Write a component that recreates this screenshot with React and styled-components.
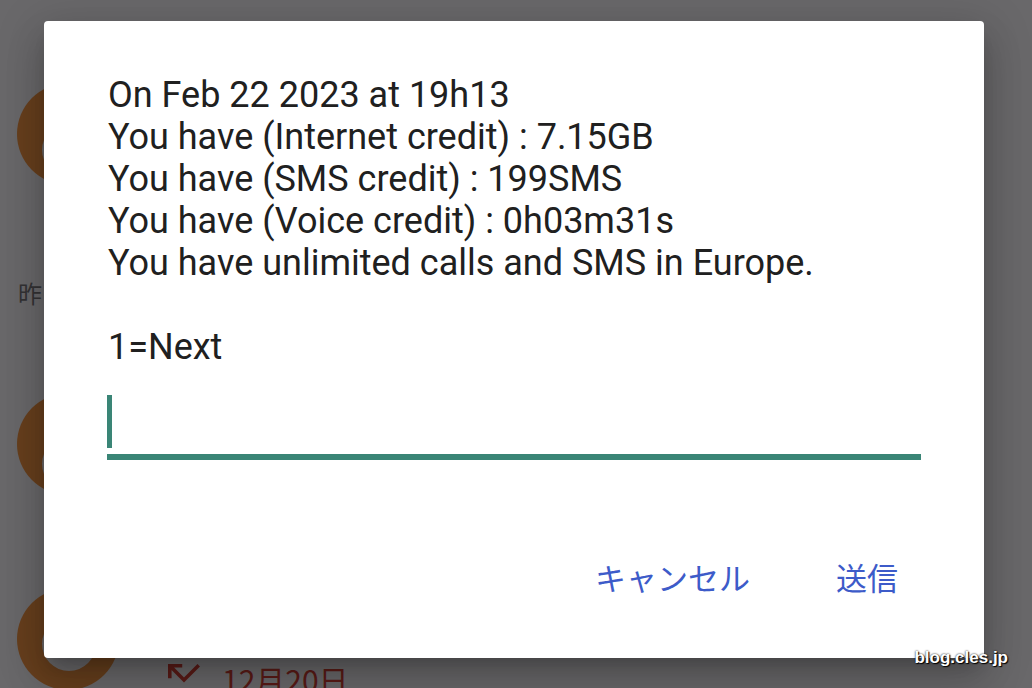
import React from 'react';
import styled, { createGlobalStyle } from 'styled-components';

const GlobalStyle = createGlobalStyle`
  html, body {
    margin: 0;
    padding: 0;
    background: #69686a;
  }
  body {
    font-family: Roboto, "Noto Sans CJK JP", sans-serif;
  }
`;

const message = `On Feb 22 2023 at 19h13
You have (Internet credit) : 7.15GB
You have (SMS credit) : 199SMS
You have (Voice credit) : 0h03m31s
You have unlimited calls and SMS in Europe.

1=Next`;

const Avatar = ({ holeY }) => (
  <AvatarSvg viewBox="0 0 102 102">
    <circle cx="51" cy="51" r="51" fill="#673f1d" />
    <circle cx="52" cy={51 + holeY} r="27" fill="#69686a" />
  </AvatarSvg>
);

const MissedIcon = () => (
  <CallIcon viewBox="3 7 18 10.41">
    <path d="M19.59 7L12 14.59 6.41 9H11V7H3v8h2v-4.59l7 7 9-9z" fill="#5a1b17" />
  </CallIcon>
);

const App = () => {
  return (
    <React.Fragment>
      <GlobalStyle />
      <Screen>
        <CallList>
          <Row>
            <Avatar holeY={16} />
          </Row>

          <SectionTitle>昨日</SectionTitle>

          <Row>
            <Avatar holeY={20} />
          </Row>

          <Row>
            <Avatar holeY={5} />
            <RowBody>
              <Detail>
                <MissedIcon />
                <span>12月20日</span>
              </Detail>
            </RowBody>
          </Row>
        </CallList>

        <Dialog>
          <Message>{message}</Message>

          <InputField>
            <Caret />
          </InputField>

          <Actions>
            <TextButton>キャンセル</TextButton>
            <TextButton>送信</TextButton>
          </Actions>
        </Dialog>

        <Watermark>blog.cles.jp</Watermark>
      </Screen>
    </React.Fragment>
  );
};

export default App;

const Screen = styled.div`
  position: relative;
  width: 1032px;
  height: 688px;
  overflow: hidden;
  background: #69686a;
`;

const CallList = styled.div`
  display: flex;
  flex-direction: column;
  padding: 37px 0 0 17px;
`;

const Row = styled.div`
  display: flex;
  align-items: flex-start;
  gap: 49px;
  padding: 46px 0 47px;
`;

const AvatarSvg = styled.svg`
  flex: none;
  width: 102px;
  height: 102px;
`;

const SectionTitle = styled.div`
  margin: 45px 0 38px 1px;
  font-family: "Noto Sans CJK JP", sans-serif;
  font-size: 24px;
  line-height: 32px;
  color: #333234;
`;

const RowBody = styled.div`
  display: flex;
  flex-direction: column;
  padding-top: 71px;
`;

const Detail = styled.div`
  display: flex;
  align-items: flex-start;
  gap: 22px;
  font-family: "Noto Sans CJK JP", sans-serif;
  font-size: 30px;
  line-height: 40px;
  color: #5a1b17;
`;

const CallIcon = styled.svg`
  flex: none;
  width: 32px;
  height: 18.5px;
  margin-top: 5px;
`;

const Dialog = styled.div`
  position: absolute;
  top: 21px;
  left: 44px;
  width: 940px;
  height: 637px;
  box-sizing: border-box;
  display: flex;
  flex-direction: column;
  padding: 53px 64px 57px;
  background: #ffffff;
  border-radius: 4px;
  box-shadow: 0 11px 15px -7px rgba(0, 0, 0, 0.2), 0 24px 38px 3px rgba(0, 0, 0, 0.14),
    0 9px 46px 8px rgba(0, 0, 0, 0.12);
`;

const Message = styled.div`
  font-family: Roboto, sans-serif;
  font-size: 36px;
  line-height: 42px;
  color: #202020;
  white-space: pre-line;
`;

const InputField = styled.div`
  display: flex;
  margin: 27px -1px 0;
  padding-bottom: 6px;
  border-bottom: 6px solid #3a8576;
`;

const Caret = styled.div`
  width: 5px;
  height: 53px;
  background: #3a8576;
`;

const Actions = styled.div`
  display: flex;
  justify-content: flex-end;
  gap: 42px;
  margin-top: auto;
`;

const TextButton = styled.button`
  height: 48px;
  padding: 0 22px;
  border: none;
  background: none;
  font-family: "Noto Sans CJK JP", sans-serif;
  font-size: 31px;
  line-height: 48px;
  color: #3d5bc9;
`;

const Watermark = styled.div`
  position: absolute;
  right: 24px;
  bottom: 20px;
  font-family: "Liberation Sans", Arial, sans-serif;
  font-weight: bold;
  font-size: 17px;
  line-height: 20px;
  color: #ffffff;
  text-shadow: 1px 1px 1px #000, 0 0 2px #000;
`;
